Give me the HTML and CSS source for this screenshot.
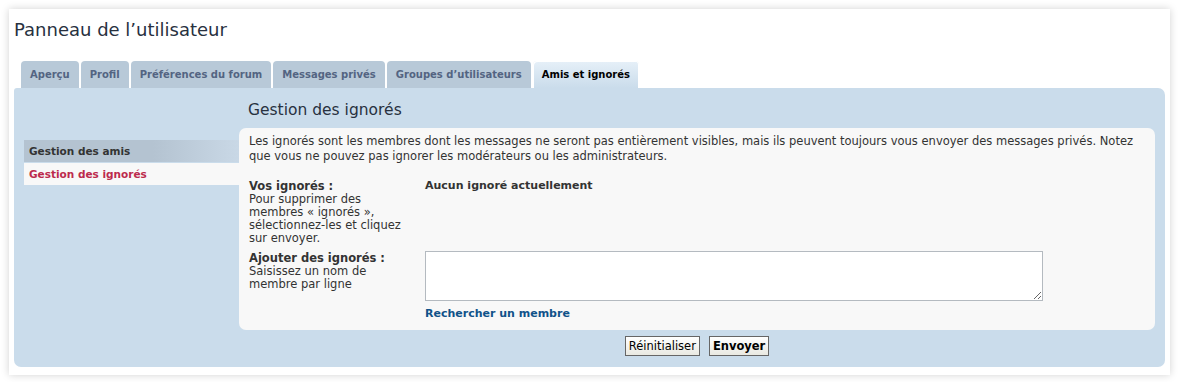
FILE: index.html
```html
<!DOCTYPE html>
<html>
<head>
  <meta charset="UTF-8">
  <title>Panneau de l'utilisateur</title>
  <link rel="stylesheet" href="styles.css">
</head>
<body>
  <div class="page">
    <h2 class="page-title">Panneau de l’utilisateur</h2>

    <ul class="tabs">
      <li class="tab">Aperçu</li>
      <li class="tab">Profil</li>
      <li class="tab">Préférences du forum</li>
      <li class="tab">Messages privés</li>
      <li class="tab">Groupes d’utilisateurs</li>
      <li class="tab active">Amis et ignorés</li>
    </ul>

    <div class="cp-panel">
      <ul class="cp-menu">
        <li class="cp-item">Gestion des amis</li>
        <li class="cp-item current">Gestion des ignorés</li>
      </ul>

      <div class="cp-main">
        <h2 class="cp-title">Gestion des ignorés</h2>

        <div class="inner">
          <p class="intro">Les ignorés sont les membres dont les messages ne seront pas entièrement visibles, mais ils peuvent toujours vous envoyer des messages privés. Notez que vous ne pouvez pas ignorer les modérateurs ou les administrateurs.</p>

          <div class="row">
            <div class="label">
              <strong>Vos ignorés :</strong>
              <span>Pour supprimer des membres « ignorés », sélectionnez-les et cliquez sur envoyer.</span>
            </div>
            <div class="field"><strong>Aucun ignoré actuellement</strong></div>
          </div>

          <div class="row">
            <div class="label">
              <strong>Ajouter des ignorés :</strong>
              <span>Saisissez un nom de membre par ligne</span>
            </div>
            <div class="field">
              <textarea class="names"></textarea>
              <a class="search" href="#">Rechercher un membre</a>
            </div>
          </div>
        </div>

        <div class="buttons">
          <button class="btn">Réinitialiser</button>
          <button class="btn primary">Envoyer</button>
        </div>
      </div>
    </div>
  </div>
</body>
</html>
```

FILE: styles.css
```css
body {
  margin: 0;
  background-color: #ffffff;
  font-family: "DejaVu Sans", Verdana, sans-serif;
  font-size: 11.5px;
  color: #333333;
}

.page {
  margin: 9px 8px 7px 9px;
  padding: 10px 5px 8px 5px;
  background-color: #ffffff;
  box-shadow: 0 0 8px rgba(0, 0, 0, 0.18);
}

.page-title {
  margin: 0;
  font-family: "DejaVu Sans", sans-serif;
  font-weight: normal;
  font-size: 18px;
  line-height: 22px;
  color: #28313f;
}

/* tabs */
.tabs {
  list-style: none;
  margin: 20px 0 0 7px;
  padding: 0;
  display: flex;
  gap: 2px;
}

.tab {
  height: 27px;
  line-height: 28px;
  padding: 0 9px;
  background-color: #b8c9d8;
  border-radius: 4px 4px 0 0;
  font-weight: bold;
  font-size: 10px;
  color: #536482;
}

.tab.active {
  background: linear-gradient(#e6f0f8, #cadceb);
  box-shadow: inset 1px 1px 0 #ffffff, inset -1px 0 0 #ffffff;
  color: #000000;
}

/* panel */
.cp-panel {
  display: flex;
  background-color: #cadceb;
  border-radius: 7px;
  border-top-left-radius: 3px;
  padding: 0 10px 11px 10px;
}

.cp-menu {
  list-style: none;
  margin: 52px 0 0 0;
  padding: 0;
  width: 215px;
  flex-shrink: 0;
}

.cp-item {
  height: 22px;
  line-height: 22px;
  padding-left: 5px;
  margin-bottom: 1px;
  font-weight: bold;
  font-size: 10.5px;
  color: #333333;
  background: linear-gradient(90deg, #b4c3d1 60%, #c9d8e6);
}

.cp-item.current {
  background: #f8f8f8;
  color: #bc2a4d;
}

.cp-main {
  flex: 1;
}

.cp-title {
  margin: 0;
  padding: 13px 0 0 9px;
  height: 27px;
  font-weight: normal;
  font-size: 15.5px;
  line-height: 18px;
  color: #28313f;
}

.inner {
  background-color: #f8f8f8;
  border-radius: 7px;
  padding: 6px 10px 9px 10px;
}

.intro {
  margin: 0 0 15px 0;
  line-height: 15px;
}

.row {
  display: flex;
  margin-bottom: 6px;
}

.row:last-child {
  margin-bottom: 0;
}

.label {
  width: 176px;
  flex-shrink: 0;
  line-height: 13px;
}

.label strong {
  display: block;
  font-size: 11.5px;
  line-height: 14px;
}

.label span {
  display: block;
  width: 162px;
}

.field {
  font-size: 11px;
  line-height: 14px;
}

.names {
  display: block;
  width: 618px;
  height: 50px;
  box-sizing: border-box;
  margin: 0 0 6px 0;
  border: 1px solid #b4bac0;
  background-color: #ffffff;
}

.search {
  font-weight: bold;
  color: #105289;
  text-decoration: none;
}

/* buttons */
.buttons {
  display: flex;
  justify-content: center;
  gap: 9px;
  padding-top: 6px;
}

.btn {
  height: 20px;
  padding: 0 3px;
  font-family: "DejaVu Sans", Verdana, sans-serif;
  font-size: 11.5px;
  color: #000000;
  background: linear-gradient(#ffffff, #e9e9e2);
  border: 1px solid #666666;
}

.btn.primary {
  font-weight: bold;
}
```
